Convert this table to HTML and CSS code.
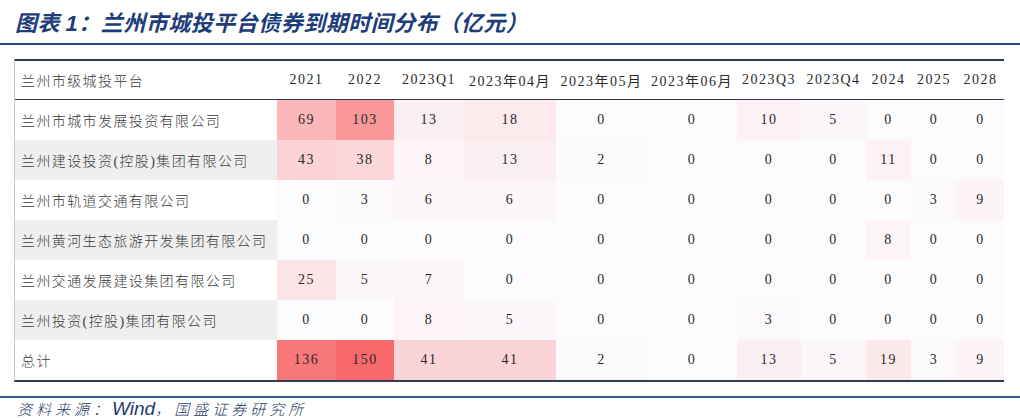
FILE: index.html
```html
<!DOCTYPE html>
<html lang="zh-CN">
<head>
<meta charset="utf-8">
<title>兰州市城投平台债券到期时间分布</title>
<link rel="stylesheet" href="styles.css">
</head>
<body>
<div class="page">
  <h1 class="title">图表 <span class="num">1</span>：兰州市城投平台债券到期时间分布（亿元）</h1>
  <div class="rule"></div>
  <div class="table">
    <div class="row head">
      <div class="cell label">兰州市级城投平台</div>
      <div class="cell">2021</div>
      <div class="cell">2022</div>
      <div class="cell">2023Q1</div>
      <div class="cell">2023年04月</div>
      <div class="cell">2023年05月</div>
      <div class="cell">2023年06月</div>
      <div class="cell">2023Q3</div>
      <div class="cell">2023Q4</div>
      <div class="cell">2024</div>
      <div class="cell">2025</div>
      <div class="cell">2028</div>
    </div>
    <div class="body">
      <div class="row">
        <div class="cell label">兰州市城市发展投资有限公司</div>
        <div class="cell" style="background:#fab8bb">69</div>
        <div class="cell" style="background:#f99799">103</div>
        <div class="cell" style="background:#fceff2">13</div>
        <div class="cell" style="background:#fceaed">18</div>
        <div class="cell" style="background:#fcfcff">0</div>
        <div class="cell" style="background:#fcfcff">0</div>
        <div class="cell" style="background:#fcf2f5">10</div>
        <div class="cell" style="background:#fcf7fa">5</div>
        <div class="cell" style="background:#fcfcff">0</div>
        <div class="cell" style="background:#fcfcff">0</div>
        <div class="cell" style="background:#fcfcff">0</div>
      </div>
      <div class="row alt">
        <div class="cell label">兰州建设投资(控股)集团有限公司</div>
        <div class="cell" style="background:#fbd2d5">43</div>
        <div class="cell" style="background:#fbd7da">38</div>
        <div class="cell" style="background:#fcf4f7">8</div>
        <div class="cell" style="background:#fceff2">13</div>
        <div class="cell" style="background:#fcfafd">2</div>
        <div class="cell" style="background:#fcfcff">0</div>
        <div class="cell" style="background:#fcfcff">0</div>
        <div class="cell" style="background:#fcfcff">0</div>
        <div class="cell" style="background:#fcf1f4">11</div>
        <div class="cell" style="background:#fcfcff">0</div>
        <div class="cell" style="background:#fcfcff">0</div>
      </div>
      <div class="row">
        <div class="cell label">兰州市轨道交通有限公司</div>
        <div class="cell" style="background:#fcfcff">0</div>
        <div class="cell" style="background:#fcf9fc">3</div>
        <div class="cell" style="background:#fcf6f9">6</div>
        <div class="cell" style="background:#fcf6f9">6</div>
        <div class="cell" style="background:#fcfcff">0</div>
        <div class="cell" style="background:#fcfcff">0</div>
        <div class="cell" style="background:#fcfcff">0</div>
        <div class="cell" style="background:#fcfcff">0</div>
        <div class="cell" style="background:#fcfcff">0</div>
        <div class="cell" style="background:#fcf9fc">3</div>
        <div class="cell" style="background:#fcf3f6">9</div>
      </div>
      <div class="row alt">
        <div class="cell label">兰州黄河生态旅游开发集团有限公司</div>
        <div class="cell" style="background:#fcfcff">0</div>
        <div class="cell" style="background:#fcfcff">0</div>
        <div class="cell" style="background:#fcfcff">0</div>
        <div class="cell" style="background:#fcfcff">0</div>
        <div class="cell" style="background:#fcfcff">0</div>
        <div class="cell" style="background:#fcfcff">0</div>
        <div class="cell" style="background:#fcfcff">0</div>
        <div class="cell" style="background:#fcfcff">0</div>
        <div class="cell" style="background:#fcf4f7">8</div>
        <div class="cell" style="background:#fcfcff">0</div>
        <div class="cell" style="background:#fcfcff">0</div>
      </div>
      <div class="row">
        <div class="cell label">兰州交通发展建设集团有限公司</div>
        <div class="cell" style="background:#fbe4e6">25</div>
        <div class="cell" style="background:#fcf7fa">5</div>
        <div class="cell" style="background:#fcf5f8">7</div>
        <div class="cell" style="background:#fcfcff">0</div>
        <div class="cell" style="background:#fcfcff">0</div>
        <div class="cell" style="background:#fcfcff">0</div>
        <div class="cell" style="background:#fcfcff">0</div>
        <div class="cell" style="background:#fcfcff">0</div>
        <div class="cell" style="background:#fcfcff">0</div>
        <div class="cell" style="background:#fcfcff">0</div>
        <div class="cell" style="background:#fcfcff">0</div>
      </div>
      <div class="row alt">
        <div class="cell label">兰州投资(控股)集团有限公司</div>
        <div class="cell" style="background:#fcfcff">0</div>
        <div class="cell" style="background:#fcfcff">0</div>
        <div class="cell" style="background:#fcf4f7">8</div>
        <div class="cell" style="background:#fcf7fa">5</div>
        <div class="cell" style="background:#fcfcff">0</div>
        <div class="cell" style="background:#fcfcff">0</div>
        <div class="cell" style="background:#fcf9fc">3</div>
        <div class="cell" style="background:#fcfcff">0</div>
        <div class="cell" style="background:#fcfcff">0</div>
        <div class="cell" style="background:#fcfcff">0</div>
        <div class="cell" style="background:#fcfcff">0</div>
      </div>
      <div class="row total">
        <div class="cell label">总计</div>
        <div class="cell" style="background:#f87779">136</div>
        <div class="cell" style="background:#f8696b">150</div>
        <div class="cell" style="background:#fbd4d7">41</div>
        <div class="cell" style="background:#fbd4d7">41</div>
        <div class="cell" style="background:#fcfafd">2</div>
        <div class="cell" style="background:#fcfcff">0</div>
        <div class="cell" style="background:#fceff2">13</div>
        <div class="cell" style="background:#fcf7fa">5</div>
        <div class="cell" style="background:#fbe9ec">19</div>
        <div class="cell" style="background:#fcf9fc">3</div>
        <div class="cell" style="background:#fcf3f6">9</div>
      </div>
    </div>
  </div>
  <div class="rule rule-bottom"></div>
  <p class="source">资料来源：<span class="wind">Wind</span>，国盛证券研究所</p>
</div>
</body>
</html>
```

FILE: styles.css
```css
html, body {
  margin: 0;
  padding: 0;
  background: #ffffff;
}

.page {
  width: 1020px;
  height: 418px;
  overflow: hidden;
  background: #ffffff;
}

.title {
  margin: 0;
  height: 43px;
  box-sizing: border-box;
  padding: 6px 0 0 15px;
  font-family: "Noto Sans CJK SC", sans-serif;
  font-size: 22px;
  line-height: 30px;
  font-weight: 700;
  font-style: italic;
  color: #1d3d7a;
  letter-spacing: 0.5px;
  white-space: nowrap;
}

.title .num {
  font-family: "Liberation Sans", sans-serif;
  font-weight: 700;
  font-style: italic;
}

.rule {
  height: 2px;
  background: #1f4a80;
}

.table {
  margin: 14px 0 0 14px;
  width: 990px;
  border-left: 1px solid #c9c9c9;
  border-top: 2px solid #2f3c52;
  border-bottom: 2px solid #2f3c52;
  box-sizing: border-box;
}

.row {
  display: grid;
  grid-template-columns: 262px 59px 58px 70px 92px 91px 90px 64px 65px 45px 46px 47px;
  height: 40px;
}

.row.head {
  height: 38px;
  border-bottom: 1px solid #2f3c52;
}

.cell {
  display: flex;
  align-items: center;
  justify-content: center;
  white-space: nowrap;
  font-family: "Liberation Serif", "Noto Sans CJK SC", serif;
  font-size: 14px;
  letter-spacing: 1.5px;
  color: #2a2a2a;
}

.cell.label {
  justify-content: flex-start;
  padding-left: 6px;
  letter-spacing: 1.4px;
  color: #3a3a3a;
  font-weight: 300;
}

.row.alt .label {
  background: #efefef;
}

.rule-bottom {
  margin-top: 14px;
  background: #2b5c94;
}

.source {
  margin: 0;
  height: 21px;
  padding-left: 17px;
  font-family: "Noto Sans CJK SC", sans-serif;
  font-size: 15px;
  line-height: 21px;
  font-style: italic;
  font-weight: 300;
  color: #1f3864;
  letter-spacing: 4px;
  white-space: nowrap;
}

.source .wind {
  font-family: "Liberation Sans", sans-serif;
  font-size: 19px;
  letter-spacing: 0;
  color: #1f3a6e;
}
```
